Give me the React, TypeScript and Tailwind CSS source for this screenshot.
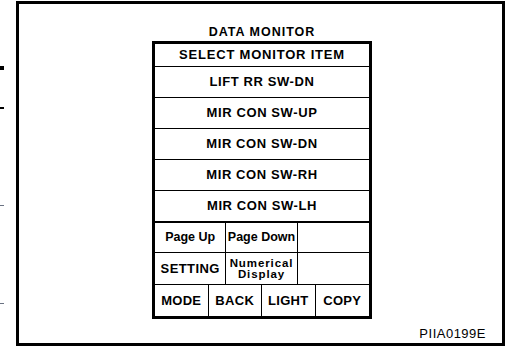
import React from "react";

const items = ["LIFT RR SW-DN", "MIR CON SW-UP", "MIR CON SW-DN", "MIR CON SW-RH", "MIR CON SW-LH"];

const Row: React.FC<{ label: string; last?: boolean }> = ({ label, last }) => (
    <div className={"flex items-center justify-center text-[13px] font-bold tracking-[0.6px] " + (last ? "h-[30px]" : "h-[31px] border-b border-black")}>
        {label}
    </div>
);

const App: React.FC = () => {
    return (
        <div className="w-[505px] h-[348px] bg-white flex font-['Liberation_Sans',Arial,sans-serif] text-black overflow-hidden">
            {/* left margin ticks */}
            <div className="w-4 flex flex-col">
                <div className="mt-[66px] w-1 h-1 bg-black" />
                <div className="mt-[37px] w-1 h-[2px] bg-black" />
                <div className="mt-[96px] w-1 h-px bg-gray-500" />
                <div className="mt-[97px] w-1 h-px bg-gray-500" />
            </div>

            <div className="mt-px w-[489px] h-[345px] border-[3px] border-black flex flex-col">
                <div className="flex">
                    <div className="ml-[133px] w-[220px] flex flex-col">
                        <div className="pt-[21px] h-[35px] leading-[14px] text-center text-[12.5px] font-bold tracking-[1px]">DATA MONITOR</div>
                        <div className="mt-[2px] border-[3px] border-black flex flex-col">
                            <div className="h-[23px] border-b border-black flex items-center justify-center text-[13px] font-bold tracking-[0.8px]">
                                SELECT MONITOR ITEM
                            </div>
                            {items.map((label, i) => (
                                <Row key={label} label={label} last={i === items.length - 1} />
                            ))}
                            <div className="border-t-2 border-black grid grid-cols-3">
                                <div className="h-[30px] border-r border-b border-black flex items-center justify-center text-[12.5px] font-bold">Page Up</div>
                                <div className="h-[30px] border-r border-b border-black flex items-center justify-center text-[12.5px] font-bold">Page Down</div>
                                <div className="h-[30px] border-b border-black" />
                                <div className="h-[32px] border-r border-b border-black flex items-center justify-center text-[13px] font-bold tracking-[0.4px]">SETTING</div>
                                <div className="h-[32px] border-r border-b border-black flex flex-col items-center justify-center text-[11.5px] leading-[11px] font-bold tracking-[0.9px]">
                                    <span>Numerical</span>
                                    <span>Display</span>
                                </div>
                                <div className="h-[32px] border-b border-black" />
                            </div>
                            <div className="grid grid-cols-4 h-[31px] text-[13px] font-bold tracking-[0.3px]">
                                <div className="border-r border-black flex items-center justify-center">MODE</div>
                                <div className="border-r border-black flex items-center justify-center">BACK</div>
                                <div className="border-r border-black flex items-center justify-center">LIGHT</div>
                                <div className="flex items-center justify-center">COPY</div>
                            </div>
                        </div>
                    </div>
                </div>
                <div className="mt-auto mb-[2px] mr-[16px] self-end text-[13px] leading-[14px] tracking-[0.5px]">PIIA0199E</div>
            </div>
        </div>
    );
};

export default App;
